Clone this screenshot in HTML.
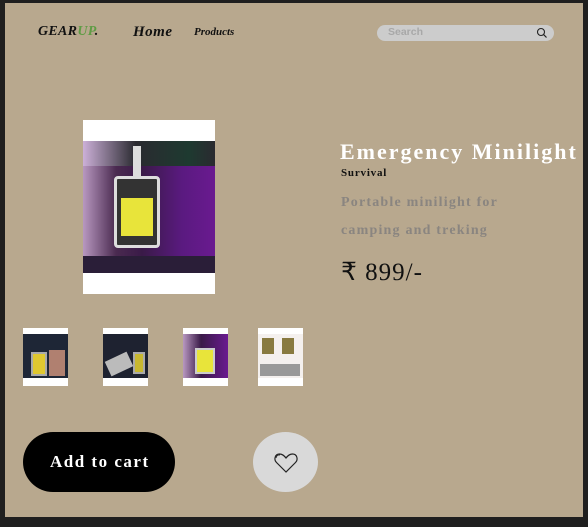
<!DOCTYPE html>
<html><head><style>
*{margin:0;padding:0;box-sizing:border-box}
body{width:588px;height:527px;background:#1f1f1f;position:relative;overflow:hidden;font-family:"Liberation Serif",serif}
.pg{position:absolute;left:5px;top:3px;width:578px;height:514px;background:#b8a88e}
.a{position:absolute;white-space:nowrap}
.thumb{position:absolute;top:328px;width:45px;height:58px;background:#fff}
.thumb .in{position:absolute;left:0;right:0;top:6px;bottom:8px}
</style></head><body>
<div class="pg"></div>
<div class="a" style="left:38px;top:24px;font-size:14px;font-style:italic;font-weight:bold;font-family:'Liberation Serif',serif;color:#111;letter-spacing:0.3px">GEAR<span style="color:#5f9c45">UP</span>.</div>
<div class="a" style="left:133px;top:24px;font-size:15px;font-style:italic;font-weight:bold;color:#111;letter-spacing:0.5px">Home</div>
<div class="a" style="left:194px;top:26px;font-size:11px;font-style:italic;font-weight:bold;color:#111">Products</div>
<div class="a" style="left:377px;top:25px;width:177px;height:16px;border-radius:8px;background:#cccccc"></div>
<div class="a" style="left:388px;top:26px;font-family:'Liberation Sans',sans-serif;font-weight:bold;font-size:10.5px;color:#a8a8a8">Search</div>
<svg class="a" style="left:536px;top:27px" width="12" height="12" viewBox="0 0 12 12"><circle cx="5" cy="5" r="3.5" fill="none" stroke="#222" stroke-width="1.1"/><line x1="7.6" y1="7.6" x2="10.5" y2="10.5" stroke="#222" stroke-width="1.2"/></svg>

<div class="a" style="left:83px;top:120px;width:132px;height:174px;background:#fff">
<div style="position:absolute;left:0;top:21px;width:132px;height:132px;background:linear-gradient(90deg,#b898c0 0%,#4a2a50 25%,#3a1a48 45%,#5a1a80 75%,#6a1a90 100%)">
<div style="position:absolute;left:0;top:0;width:132px;height:25px;background:linear-gradient(90deg,#ccb0d8,#2a2a30 40%,#1e3a30 80%,#2a2a30)"></div>
<div style="position:absolute;left:0;top:115px;width:132px;height:17px;background:#2a1e38"></div>
<div style="position:absolute;left:31px;top:35px;width:46px;height:72px;border:3px solid #ddd;border-radius:4px;background:#333"></div>
<div style="position:absolute;left:38px;top:57px;width:32px;height:38px;background:#e8e43a"></div>
<div style="position:absolute;left:50px;top:5px;width:8px;height:32px;background:#ddd"></div>
</div></div>

<div class="thumb" style="left:23px"><div class="in" style="background:#1e2636"><div style="position:absolute;left:8px;top:18px;width:16px;height:24px;background:#e0c830;border:2px solid #aaa"></div><div style="position:absolute;left:26px;top:16px;width:16px;height:26px;background:#b08070"></div></div></div>
<div class="thumb" style="left:103px"><div class="in" style="background:#1e2230"><div style="position:absolute;left:4px;top:22px;width:24px;height:16px;background:#bbb;transform:rotate(-25deg)"></div><div style="position:absolute;left:30px;top:18px;width:12px;height:22px;background:#c8b830;border:2px solid #aaa"></div></div></div>
<div class="thumb" style="left:183px"><div class="in" style="background:linear-gradient(90deg,#b898c0,#3a1a48 40%,#6a1a90)"><div style="position:absolute;left:12px;top:14px;width:20px;height:26px;background:#e8e43a;border:2px solid #ccc"></div></div></div>
<div class="thumb" style="left:258px"><div class="in" style="background:#f4f0ee"><div style="position:absolute;left:4px;top:4px;width:12px;height:16px;background:#887a40"></div><div style="position:absolute;left:24px;top:4px;width:12px;height:16px;background:#887a40"></div><div style="position:absolute;left:2px;top:30px;width:40px;height:12px;background:#999"></div></div></div>

<div class="a" style="left:340px;top:139px;font-size:22px;font-weight:bold;color:#fff;letter-spacing:2px">Emergency Minilight</div>
<div class="a" style="left:341px;top:167px;font-size:11px;font-weight:bold;color:#111;letter-spacing:0.8px">Survival</div>
<div class="a" style="left:341px;top:195px;font-size:14px;font-weight:bold;color:#8a8580;letter-spacing:1.2px">Portable minilight for</div>
<div class="a" style="left:341px;top:223px;font-size:14px;font-weight:bold;color:#8a8580;letter-spacing:1.2px">camping and treking</div>
<div class="a" style="left:341px;top:257px;font-size:25px;color:#111;letter-spacing:1px">₹ 899/-</div>

<div class="a" style="left:23px;top:432px;width:152px;height:60px;border-radius:30px;background:#000"></div>
<div class="a" style="left:50px;top:452px;font-size:17px;font-weight:bold;color:#fff;letter-spacing:1.5px">Add to cart</div>
<div class="a" style="left:253px;top:432px;width:65px;height:60px;border-radius:50%;background:#d9d9d9"></div>
<svg class="a" style="left:273px;top:452px" width="26" height="22" viewBox="0 0 26 22"><path d="M13 20 L3.5 10.5 C0.5 7.5 2 2 6.5 2 C9.5 2 11.5 4 13 6 C14.5 4 16.5 2 19.5 2 C24 2 25.5 7.5 22.5 10.5 Z" fill="none" stroke="#222" stroke-width="1.2"/><path d="M3 6 C3.5 3.5 5 2.8 7 3" fill="none" stroke="#222" stroke-width="0.9"/></svg>
</body></html>
